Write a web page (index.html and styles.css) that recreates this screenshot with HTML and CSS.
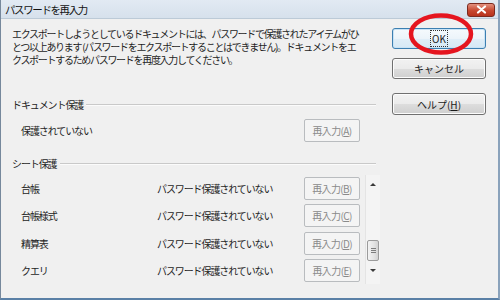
FILE: index.html
```html
<!DOCTYPE html>
<html lang="ja">
<head>
<meta charset="utf-8">
<title>パスワードを再入力</title>
<link rel="stylesheet" href="styles.css">
</head>
<body>
<div class="window">
  <div class="titlebar">
    <span class="title">パスワードを再入力</span>
    <span class="close"><svg width="11" height="9" viewBox="0 0 11 9"><path d="M2 1.5 L9 7.5 M9 1.5 L2 7.5" stroke="#fff" stroke-width="2.2" stroke-linecap="round"/></svg></span>
  </div>
  <div class="body">
    <div class="main">
      <p class="desc">エクスポートしようとしているドキュメントには、パスワードで保護されたアイテムがひ<br>とつ以上あります (パスワードをエクスポートすることはできません)。ドキュメントをエ<br>クスポートするためパスワードを再度入力してください。</p>

      <div class="section-head sec1"><span>ドキュメント保護</span><i class="rule"></i></div>
      <div class="row doc-row">
        <span>保護されていない</span>
        <span></span>
        <button class="reenter">再入力(<u>A</u>)</button>
      </div>

      <div class="section-head sec2"><span>シート保護</span><i class="rule"></i></div>
      <div class="list">
        <div class="rows">
          <div class="row"><span>台帳</span><span>パスワード保護されていない</span><button class="reenter">再入力(<u>B</u>)</button></div>
          <div class="row"><span>台帳様式</span><span>パスワード保護されていない</span><button class="reenter">再入力(<u>C</u>)</button></div>
          <div class="row"><span>精算表</span><span>パスワード保護されていない</span><button class="reenter">再入力(<u>D</u>)</button></div>
          <div class="row"><span>クエリ</span><span>パスワード保護されていない</span><button class="reenter">再入力(<u>E</u>)</button></div>
        </div>
        <div class="scrollbar">
          <span class="arrow up"></span>
          <span class="thumb"><svg width="5" height="7" viewBox="0 0 5 7"><path d="M0 1.5H5M0 3.5H5M0 5.5H5" stroke="#7d7d7d" stroke-width="1"/></svg></span>
          <span class="arrow down"></span>
        </div>
      </div>
    </div>
    <div class="side">
      <button class="btn default"><span class="focus">OK</span></button>
      <button class="btn">キャンセル</button>
      <button class="btn help">ヘルプ(<u>H</u>)</button>
    </div>
  </div>
  <svg class="circle" width="70" height="48" viewBox="0 0 70 48"><ellipse cx="35" cy="23" rx="30" ry="18.5" fill="none" stroke="#e5151f" stroke-width="4.5"/></svg>
</div>
</body>
</html>
```
FILE: styles.css
```css
html, body {
  margin: 0;
  padding: 0;
  background: #f0f0f0;
}
body {
  font-family: "Noto Sans CJK JP", "Noto Sans", sans-serif;
  font-size: 10px;
  letter-spacing: -1.1px;
  color: #1e1e1e;
}
.window {
  position: relative;
  width: 500px;
  height: 300px;
  box-sizing: border-box;
  display: flex;
  flex-direction: column;
  background: #f0f0f0;
  border-left: 1px solid #76889c;
  border-right: 2px solid #8aa2bb;
  border-bottom: 2px solid #5a80a6;
  overflow: hidden;
}
.titlebar {
  height: 18px;
  flex: none;
  display: flex;
  align-items: center;
  justify-content: space-between;
  padding: 0 3px 0 4px;
  background: linear-gradient(#e2eaf3, #d6e1ec);
  border-bottom: 1px solid #bccad7;
}
.title {
  font-size: 10.5px;
  letter-spacing: -1.4px;
  color: #111;
}
.close {
  width: 26px;
  height: 12px;
  display: flex;
  align-items: center;
  justify-content: center;
  background: linear-gradient(#e3917f, #c7472f 55%, #b8321c);
  border: 1px solid #7b2a1f;
  border-radius: 3px;
  margin-top: 1px;
}
.body {
  flex: 1;
  display: flex;
}
.main {
  width: 368px;
  padding-left: 11px;
}
.desc {
  margin: 8px 0 0;
  line-height: 13px;
  letter-spacing: -1.3px;
  white-space: nowrap;
}
.section-head {
  display: flex;
  align-items: center;
  height: 13px;
  line-height: 13px;
  margin-right: 4px;
}
.section-head span {
  padding-right: 3px;
}
.rule {
  flex: 1;
  height: 0;
  border-top: 1px solid #c9c9c9;
  border-bottom: 1px solid #fbfbfb;
}
.sec1 { margin-top: 32px; }
.sec2 { margin-top: 15px; }
.row {
  display: grid;
  grid-template-columns: 136px 147px 56px;
  align-items: center;
  height: 23px;
  padding-left: 9px;
}
.doc-row { margin-top: 8px; }
.reenter {
  height: 23px;
  padding: 0;
  font: inherit;
  letter-spacing: -0.6px;
  color: #8a8a8a;
  background: #f4f4f4;
  border: 1px solid #b9bcbf;
  border-radius: 2px;
}
.reenter u { text-decoration-color: #8a8a8a; }
.list {
  display: flex;
  margin-top: 5px;
}
.rows {
  display: flex;
  flex-direction: column;
  gap: 4.4px;
  padding-top: 2px;
}
.scrollbar {
  margin-left: 5px;
  width: 14px;
  height: 109px;
  display: flex;
  flex-direction: column;
  align-items: center;
  background: #f4f4f4;
  border-left: 1px solid #e4e4e4;
}
.arrow {
  width: 0;
  height: 0;
  border-left: 3px solid transparent;
  border-right: 3px solid transparent;
}
.arrow.up {
  border-bottom: 3px solid #3a3a3a;
  margin-top: 8px;
}
.thumb {
  width: 12px;
  height: 21px;
  margin-top: 54px;
  box-sizing: border-box;
  border: 1px solid #9b9b9b;
  border-radius: 2px;
  background: linear-gradient(90deg, #f3f3f3, #e3e3e3 60%, #d3d3d3);
  display: flex;
  align-items: center;
  justify-content: center;
}
.arrow.down {
  border-top: 3px solid #3a3a3a;
  margin-top: 8px;
}
.side {
  display: flex;
  flex-direction: column;
  padding-left: 12px;
  padding-top: 9px;
}
.btn {
  width: 94px;
  height: 21px;
  padding: 0;
  font: inherit;
  color: #1a1a1a;
  border: 1px solid #707070;
  border-radius: 3px;
  background: linear-gradient(#f2f2f2, #ebebeb 50%, #dddddd 51%, #cfcfcf);
  box-shadow: inset 0 0 0 1px #fcfcfc;
}
.btn + .btn { margin-top: 9px; }
.btn.help {
  margin-top: 14px;
  height: 22px;
}
.btn.default {
  border-color: #3c7fb1;
  background: linear-gradient(#f5fafd, #ecf4fa 50%, #e0eef8 51%, #d6e9f5);
  box-shadow: inset 0 0 0 1px #c9e3f5;
}
.focus {
  display: inline-block;
  padding: 1px 1px;
  line-height: 13px;
  letter-spacing: 0;
  outline: 1px dotted #333;
}
.circle {
  position: absolute;
  left: 405px;
  top: 11px;
}
```
